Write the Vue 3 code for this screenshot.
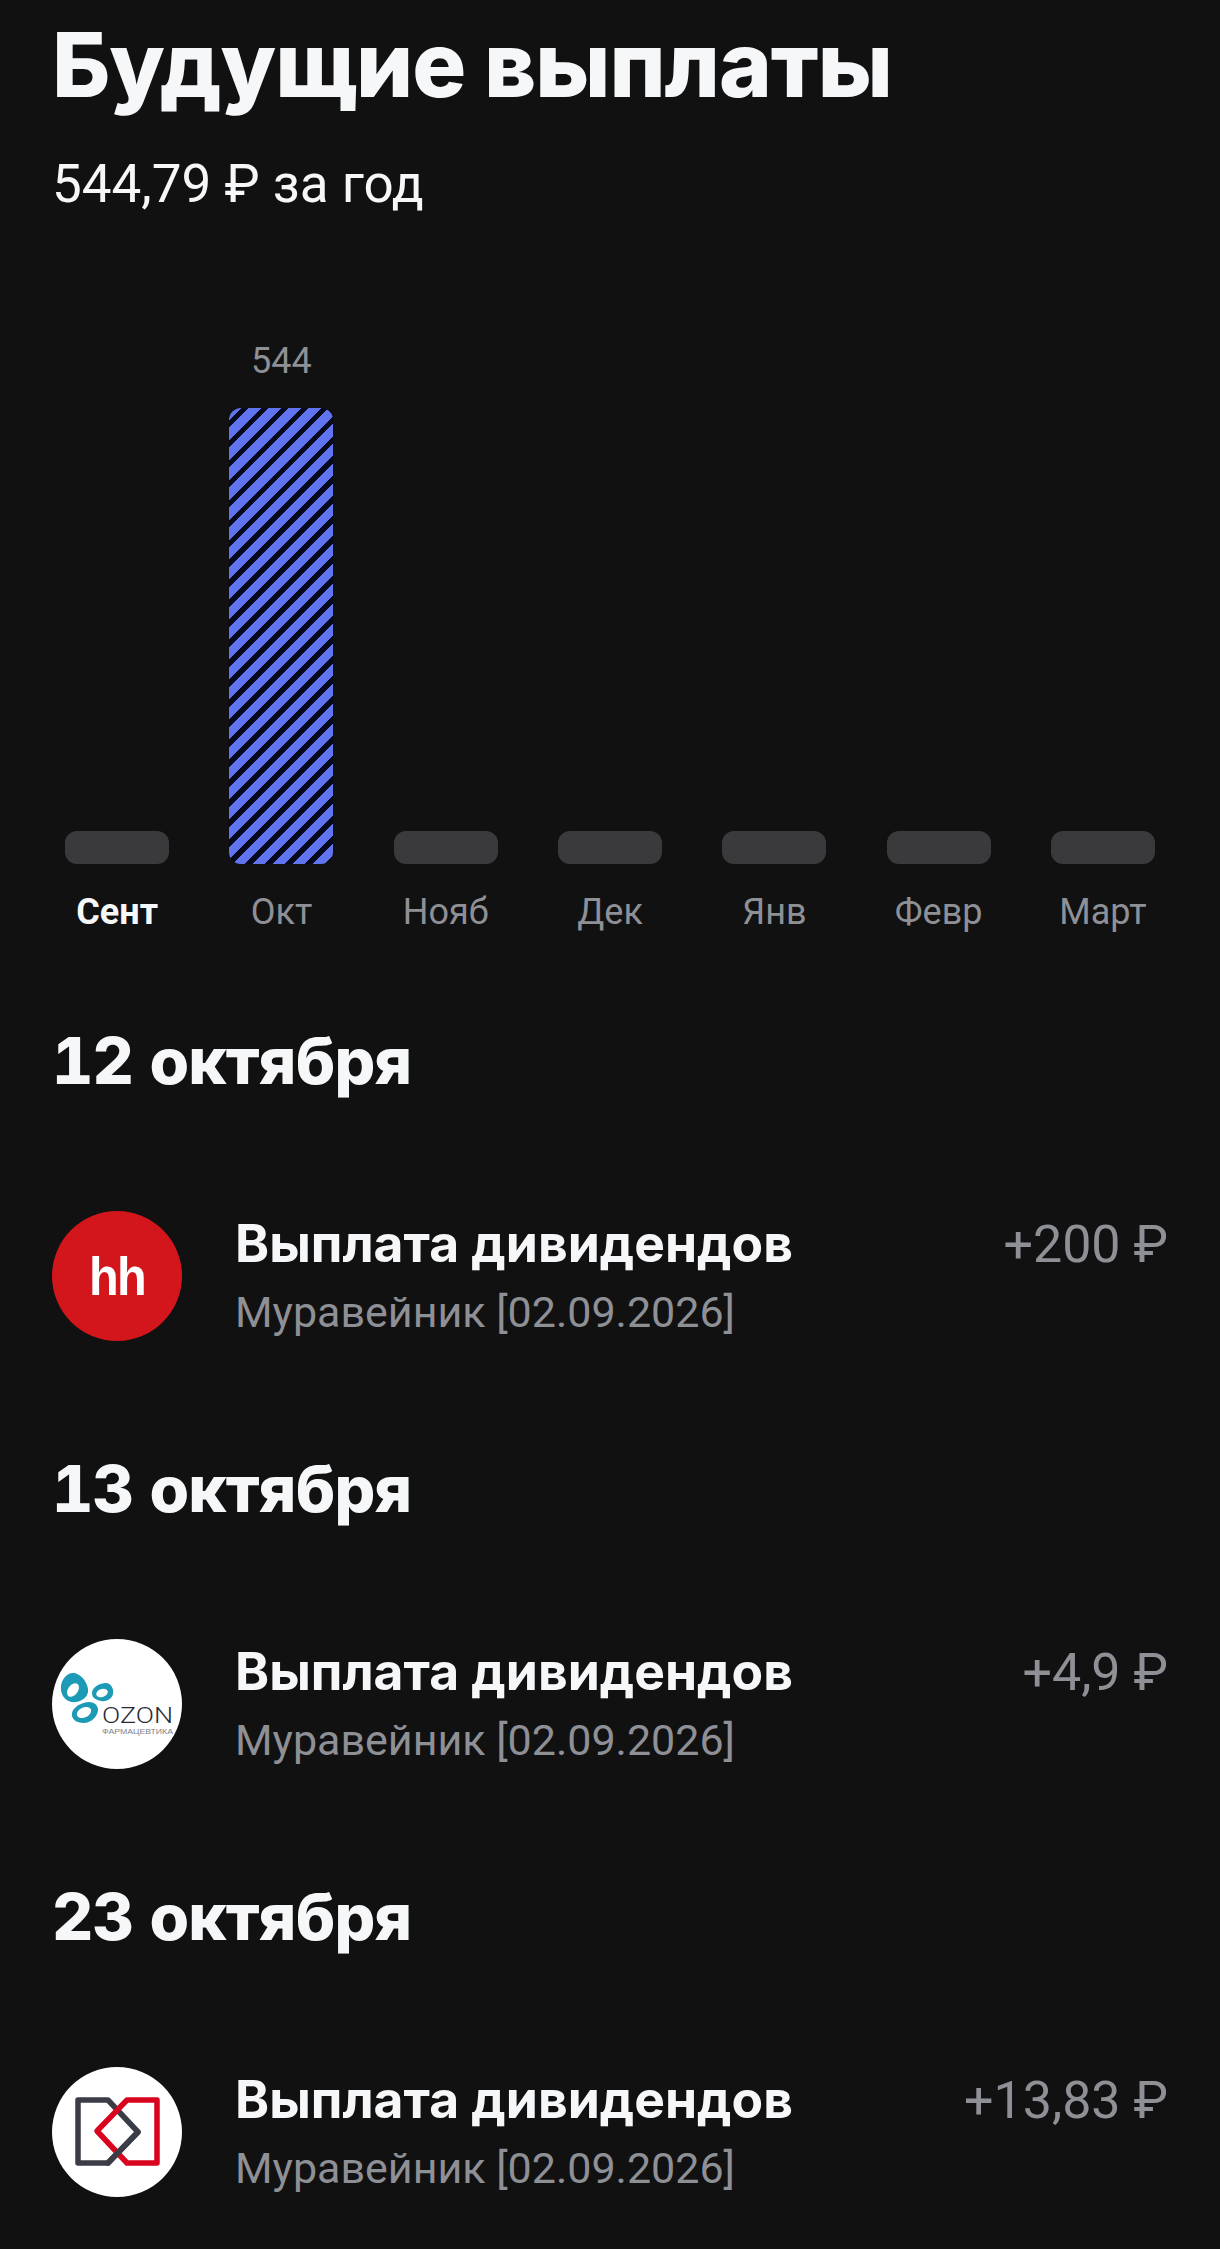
<script setup>
const months = [
  { name: 'Сент', active: true },
  { name: 'Окт', value: 544, height: 456 },
  { name: 'Нояб' },
  { name: 'Дек' },
  { name: 'Янв' },
  { name: 'Февр' },
  { name: 'Март' },
]

const payouts = [
  { date: '12 октября', logo: 'hh', amount: '+200 ₽' },
  { date: '13 октября', logo: 'ozon', amount: '+4,9 ₽' },
  { date: '23 октября', logo: 'dom', amount: '+13,83 ₽' },
]
</script>

<template>
  <div class="page">
    <h1 class="title">Будущие выплаты</h1>
    <p class="total">544,79 ₽ за год</p>

    <div class="chart">
      <div v-for="m in months" :key="m.name" class="col">
        <div class="plot">
          <span v-if="m.value" class="value">{{ m.value }}</span>
          <div v-if="m.value" class="bar striped" :style="{ height: m.height + 'px' }"></div>
          <div v-else class="bar"></div>
        </div>
        <span class="month" :class="{ active: m.active }">{{ m.name }}</span>
      </div>
    </div>

    <div class="groups">
      <section v-for="p in payouts" :key="p.date">
        <h2 class="date">{{ p.date }}</h2>
        <div class="row">
          <div class="logo" :class="p.logo">
            <span v-if="p.logo === 'hh'" class="hh-text">hh</span>
            <svg v-else-if="p.logo === 'ozon'" viewBox="0 0 130 130" width="130" height="130">
              <path d="M9 51c-1-9 5-17 12-17 7 0 14 8 15 16 1 7-5 12-12 13-8 1-14-4-15-12z" fill="#1d9ab5" />
              <ellipse cx="21" cy="51" rx="5" ry="7.5" fill="#fff" transform="rotate(35 21 51)" />
              <path d="M40 54c0-6 8-10 14-10 5 0 8 6 7 11-1 5-7 8-12 7-5-1-9-3-9-8z" fill="#1d9ab5" />
              <ellipse cx="50" cy="54" rx="6" ry="4" fill="#fff" transform="rotate(-20 50 54)" />
              <path d="M20 74c1-6 10-11 17-11 6 0 9 4 9 8 0 6-7 13-14 13-8 0-13-4-12-10z" fill="#1d9ab5" />
              <ellipse cx="32" cy="73.5" rx="7.5" ry="5" fill="#fff" transform="rotate(-25 32 73.5)" />
              <text x="50" y="84" textLength="71" lengthAdjust="spacingAndGlyphs" class="oz-name">OZON</text>
              <text x="50" y="95" textLength="71" lengthAdjust="spacingAndGlyphs" class="oz-sub">ФАРМАЦЕВТИКА</text>
            </svg>
            <svg v-else viewBox="0 0 130 130" width="130" height="130">
              <path d="M26 33H56L86 65L56 96H26Z" fill="none" stroke="#3a3c47" stroke-width="5.5" stroke-linejoin="round" />
              <path d="M75 33H105V96H75L45 64Z" fill="none" stroke="#d9041e" stroke-width="5.5" stroke-linejoin="round" />
              <path d="M86 65L56 96" fill="none" stroke="#3a3c47" stroke-width="5.5" stroke-linecap="round" />
            </svg>
          </div>
          <div class="info">
            <div class="name">Выплата дивидендов</div>
            <div class="sub">Муравейник [02.09.2026]</div>
          </div>
          <div class="amount">{{ p.amount }}</div>
        </div>
      </section>
    </div>
  </div>
</template>

<style>
html, body {
  background: #111112;
}
</style>

<style scoped>
.page {
  width: 1220px;
  height: 2249px;
  overflow: hidden;
  box-sizing: border-box;
  padding: 12px 52px 0;
  background: #111112;
  color: #f6f7f8;
  font-family: Roboto, "Noto Sans", sans-serif;
}

.title {
  margin: 0;
  font-size: 90px;
  line-height: 106px;
  font-weight: 800;
  font-family: Inter, Roboto, sans-serif;
  letter-spacing: -1px;
}

.total {
  margin: 36px 0 0;
  font-size: 53px;
  line-height: 60px;
}

.chart {
  display: grid;
  grid-template-columns: repeat(7, 164.3px);
  margin: 110px -17px 0;
}

.col {
  display: flex;
  flex-direction: column;
  align-items: center;
}

.plot {
  height: 540px;
  display: flex;
  flex-direction: column;
  justify-content: flex-end;
  align-items: center;
}

.bar {
  width: 104px;
  height: 33px;
  border-radius: 12px;
  background: #3a3a3c;
}

.striped {
  background: repeating-linear-gradient(135deg, #5f74ee 0 8.5px, #060a1c 8.5px 14.14px);
}

.value {
  font-size: 36px;
  line-height: 42px;
  color: #8e9096;
  margin-bottom: 26px;
}

.month {
  margin-top: 26px;
  font-size: 36px;
  line-height: 44px;
  color: #8e9096;
}

.month.active {
  color: #f6f7f8;
  font-weight: 700;
}

.groups {
  display: flex;
  flex-direction: column;
  gap: 110px;
  margin-top: 89px;
}

.date {
  margin: 0;
  font-size: 64px;
  line-height: 76px;
  font-weight: 800;
  font-family: Inter, Roboto, sans-serif;
  font-variant-numeric: tabular-nums;
  letter-spacing: -0.8px;
}

.row {
  display: flex;
  align-items: center;
  margin-top: 112px;
  height: 130px;
}

.logo {
  width: 130px;
  height: 130px;
  border-radius: 50%;
  flex-shrink: 0;
  overflow: hidden;
  background: #fff;
}

.logo svg {
  display: block;
}

.logo.hh {
  background: #d3161b;
  color: #fff;
  display: flex;
  align-items: center;
  justify-content: center;
}

.hh-text {
  font-size: 54px;
  font-weight: 700;
  font-family: "Liberation Sans", sans-serif;
  letter-spacing: -2px;
  transform: scaleX(0.9);
}

.oz-name {
  font-size: 22px;
  font-weight: 300;
  font-family: Roboto, sans-serif;
  fill: #2a2c33;
}

.oz-sub {
  font-size: 7px;
  font-family: "Liberation Sans", sans-serif;
  fill: #7d8088;
}

.info {
  flex: 1;
  margin-left: 53px;
  margin-top: -2px;
}

.name {
  font-size: 51.6px;
  line-height: 60px;
  font-weight: 700;
  font-family: Inter, Roboto, sans-serif;
}

.sub {
  font-size: 43px;
  line-height: 50px;
  margin-top: 14px;
  color: #8e9096;
}

.amount {
  align-self: flex-start;
  margin-top: 4px;
  font-size: 52px;
  line-height: 60px;
  color: #8e9096;
}
</style>
